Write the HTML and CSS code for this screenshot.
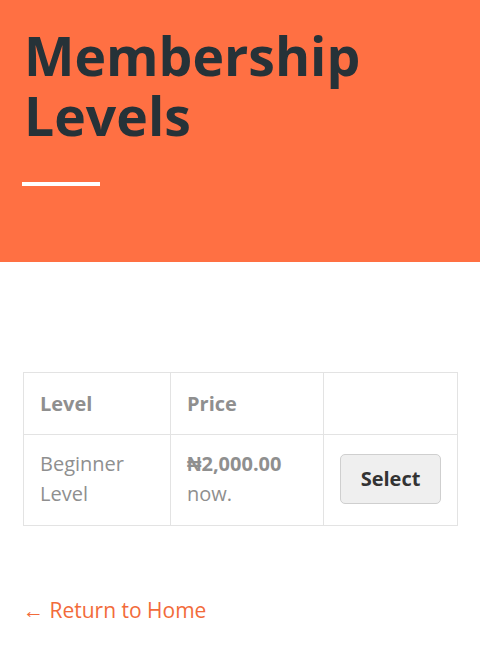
FILE: index.html
```html
<!DOCTYPE html>
<html>
<head>
<meta charset="utf-8">
<link rel="stylesheet" href="styles.css">
</head>
<body>
<header class="hero">
  <h1 class="title">Membership Levels</h1>
  <div class="bar"></div>
</header>
<main class="content">
  <table class="levels">
    <thead>
      <tr><th class="c1">Level</th><th class="c2">Price</th><th class="c3"></th></tr>
    </thead>
    <tbody>
      <tr>
        <td>Beginner Level</td>
        <td><strong>₦2,000.00</strong> now.</td>
        <td><button class="select">Select</button></td>
      </tr>
    </tbody>
  </table>
  <a class="back" href="#">← Return to Home</a>
</main>
</body>
</html>
```
FILE: styles.css
```css
* { box-sizing: border-box; }
body {
  margin: 0;
  font-family: "Open Sans", sans-serif;
  background: #fff;
}
.hero {
  background: #ff7043;
  height: 262px;
  padding: 26px 24px 0 24px;
}
.title {
  margin: 0;
  font-size: 53.5px;
  line-height: 60px;
  font-weight: 700;
  color: #263238;
  width: 380px;
}
.bar {
  margin-top: 36px;
  margin-left: -2px;
  width: 78px;
  height: 4px;
  background: #fff;
}
.content {
  padding: 110px 23px 0 23px;
}
.levels {
  width: 435px;
  border-collapse: collapse;
  font-size: 20px;
  color: #8f8f8f;
}
.levels th, .levels td {
  border: 1px solid #e3e3e3;
  text-align: left;
  padding: 0 16px;
  line-height: 30px;
}
.levels th {
  height: 62px;
  font-weight: 700;
  padding-top: 0;
}
.levels td {
  height: 91px;
  vertical-align: middle;
  padding-top: 0;
  padding-bottom: 2px;
}
.c1 { width: 147px; }
.c2 { width: 153px; }
.levels strong { font-weight: 700; }
.select {
  font-family: "Open Sans", sans-serif;
  font-size: 20px;
  font-weight: 700;
  color: #333;
  background: #efefef;
  border: 1px solid #cfcfcf;
  border-radius: 5px;
  width: 101px;
  height: 50px;
  padding: 0 0 2px 0;
}
.back {
  display: inline-block;
  margin-top: 70px;
  font-size: 21px;
  color: #f26b3a;
  text-decoration: none;
}
```
